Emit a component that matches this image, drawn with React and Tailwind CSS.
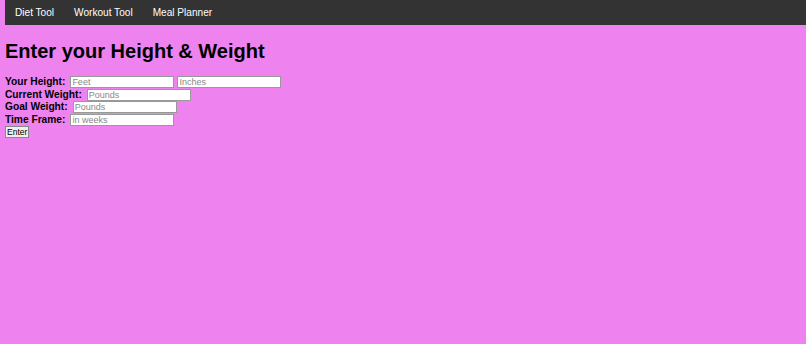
export default function App() {
  const input = "w-[104px] h-[12px] border border-[#999] bg-white px-[1px] text-[9px] font-normal leading-none text-black placeholder:text-[#888] outline-none";
  return (
    <div className="min-h-screen bg-[#ee82ee] pl-[5px] text-black" style={{ fontFamily: '"Liberation Sans", Arial, sans-serif' }}>
      <nav className="flex h-[25px] items-center bg-[#333] text-[10.1px] text-white">
        <a className="px-[10px]">Diet Tool</a>
        <a className="px-[10px]">Workout Tool</a>
        <a className="px-[10px]">Meal Planner</a>
      </nav>
      <h1 className="mt-[13px] mb-[12px] text-[20px] font-bold leading-[26px]">Enter your Height &amp; Weight</h1>
      <form className="text-[10.2px] font-bold leading-[12.5px]">
        <div className="flex items-center gap-[5px]">
          <label>Your Height:</label>
          <input className={input} placeholder="Feet" />
          <input className={`${input} -ml-[2px]`} placeholder="Inches" />
        </div>
        <div className="flex items-center gap-[5px]">
          <label>Current Weight:</label>
          <input className={input} placeholder="Pounds" />
        </div>
        <div className="flex items-center gap-[5px]">
          <label>Goal Weight:</label>
          <input className={input} placeholder="Pounds" />
        </div>
        <div className="flex items-center gap-[5px]">
          <label>Time Frame:</label>
          <input className={input} placeholder="in weeks" />
        </div>
        <button type="button" className="h-[12px] border border-[#888] bg-[#efefef] px-[1px] text-[8.5px] font-normal leading-none">Enter</button>
      </form>
    </div>
  );
}
